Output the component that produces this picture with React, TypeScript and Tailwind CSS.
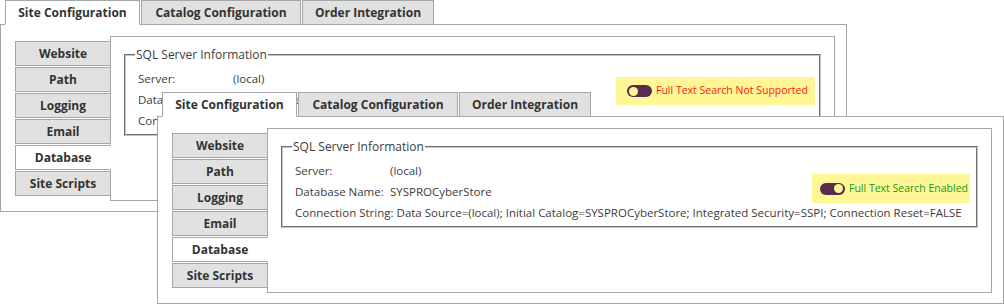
import React from "react";

const FONT = { fontFamily: '"Open Sans", "Noto Sans", sans-serif' };

function Tab({ label, active, w }: { label: string; active?: boolean; w: string }) {
  return (
    <div
      className={
        "h-[25px] flex items-center justify-center border border-[#a6a6a6] text-[12px] font-bold text-[#333] whitespace-nowrap " +
        w +
        (active ? " bg-white border-b-white" : " bg-[#e1e1e1]")
      }
    >
      {label}
    </div>
  );
}

function NavItem({ label, active }: { label: string; active?: boolean }) {
  return (
    <div
      className={
        "h-[25px] flex items-center justify-center border border-[#a6a6a6] text-[12px] font-bold text-[#333] " +
        (active ? "bg-white border-r-white" : "bg-[#e1e1e1]")
      }
    >
      {label}
    </div>
  );
}

function Toggle({ on }: { on: boolean }) {
  return (
    <div className={"w-[25px] h-[12px] rounded-full bg-[#5a2a4f] flex items-center px-[2px] shrink-0 " + (on ? "justify-end" : "justify-start")}>
      <div className="w-[9px] h-[9px] rounded-full bg-[#fff59a]" />
    </div>
  );
}

type Row = { label: string; value: string };

function Window({
  rows,
  fts,
}: {
  rows: Row[];
  fts: { text: string; on: boolean; box: string; textColor: string };
}) {
  return (
    <div className="w-[847px]" style={FONT}>
      <div className="relative z-10 flex gap-px pl-[5px] h-[25px]">
        <Tab label="Site Configuration" active w="w-[135px]" />
        <Tab label="Catalog Configuration" w="w-[160px]" />
        <Tab label="Order Integration" w="w-[132px]" />
      </div>
      <div className="-mt-px h-[188px] border border-[#a6a6a6] bg-white flex pt-[11px] pl-[14px] pr-[11px] pb-[10px]">
        <div className="relative z-10 w-[96px] -mr-px shrink-0 flex flex-col gap-px pt-[5px]">
          <NavItem label="Website" />
          <NavItem label="Path" />
          <NavItem label="Logging" />
          <NavItem label="Email" />
          <NavItem label="Database" active />
          <NavItem label="Site Scripts" />
        </div>
        <div className="relative flex-1 border border-[#a6a6a6] bg-white px-[13px] pt-[10px]">
          <fieldset className="border-2 [border-style:groove] border-[#c4c4c4] pl-[9px] pr-[9px] pt-[5px] pb-[3px]">
            <legend className="px-[1px] text-[12px] leading-[16px] text-[#3c3c3c]">SQL Server Information</legend>
            <div className="pl-[3px] text-[11.5px] leading-[21px] text-[#3c3c3c]">
              {rows.map((r) => (
                <div key={r.label} className="flex whitespace-nowrap">
                  <span className="min-w-[95px] pr-[3px]">{r.label}</span>
                  <span>{r.value}</span>
                </div>
              ))}
            </div>
          </fieldset>
          <div className={"absolute flex items-center bg-[#fff796] " + fts.box}>
            <Toggle on={fts.on} />
            <span className={"ml-[4px] text-[10.5px] whitespace-nowrap " + fts.textColor}>{fts.text}</span>
          </div>
        </div>
      </div>
    </div>
  );
}

const CONN =
  "Data Source=(local); Initial Catalog=SYSPROCyberStore; Integrated Security=SSPI; Connection Reset=FALSE";

export default function App() {
  return (
    <div className="relative w-[1004px] h-[305px] overflow-hidden bg-white">
      <Window
        rows={[
          { label: "Server:", value: "(local)" },
          { label: "Database Name:", value: "SYSPROCyberStore" },
          { label: "Connection String:", value: CONN },
        ]}
        fts={{
          text: "Full Text Search Not Supported",
          on: false,
          box: "top-[40px] right-[19px] h-[28px] w-[199px] pl-[11px]",
          textColor: "text-[#ff1414]",
        }}
      />
      <div className="absolute left-[157px] top-[92px] z-20">
        <Window
          rows={[
            { label: "Server:", value: "(local)" },
            { label: "Database Name:", value: "SYSPROCyberStore" },
            { label: "Connection String:", value: CONN },
          ]}
          fts={{
            text: "Full Text Search Enabled",
            on: true,
            box: "top-[45px] right-[21px] h-[29px] w-[158px] pl-[8px]",
            textColor: "text-[#159a15]",
          }}
        />
      </div>
    </div>
  );
}
